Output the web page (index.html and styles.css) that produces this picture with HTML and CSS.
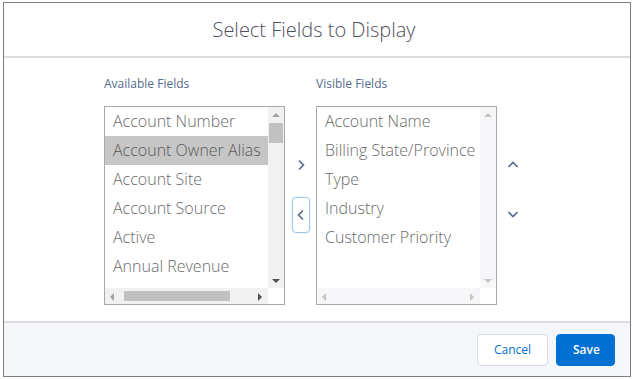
FILE: index.html
```html
<!DOCTYPE html>
<html lang="en">
<head>
    <meta charset="UTF-8">
    <title>Select Fields to Display</title>
    <link rel="stylesheet" href="styles.css">
</head>
<body>

    <div id="modal">
        <div class="modal-header">
            <h2>Select Fields to Display</h2>
        </div>

        <div class="modal-body">
            <div class="dueling">
                <div class="column">
                    <div class="col-label">Available Fields</div>
                    <div class="listbox">
                        <ul class="options">
                            <li>Account Number</li>
                            <li class="selected">Account Owner Alias</li>
                            <li>Account Site</li>
                            <li>Account Source</li>
                            <li>Active</li>
                            <li>Annual Revenue</li>
                        </ul>
                        <div class="vscroll">
                            <span class="arrow up"></span>
                            <div class="vtrack"><div class="vthumb"></div></div>
                            <span class="arrow down"></span>
                        </div>
                        <div class="hscroll">
                            <span class="arrow left"></span>
                            <div class="htrack"><div class="hthumb"></div></div>
                            <span class="arrow right"></span>
                        </div>
                        <div class="corner"></div>
                    </div>
                </div>

                <div class="move-buttons">
                    <button class="icon-btn" type="button">
                        <svg width="10" height="12" viewBox="0 0 10 12"><path d="M3 1.5 L7.5 6 L3 10.5" fill="none" stroke="#54698d" stroke-width="1.6"/></svg>
                    </button>
                    <button class="icon-btn focused" type="button">
                        <svg width="10" height="12" viewBox="0 0 10 12"><path d="M7 1.5 L2.5 6 L7 10.5" fill="none" stroke="#54698d" stroke-width="1.6"/></svg>
                    </button>
                </div>

                <div class="column">
                    <div class="col-label">Visible Fields</div>
                    <div class="listbox light">
                        <ul class="options">
                            <li>Account Name</li>
                            <li>Billing State/Province</li>
                            <li>Type</li>
                            <li>Industry</li>
                            <li>Customer Priority</li>
                        </ul>
                        <div class="vscroll">
                            <span class="arrow up"></span>
                            <div class="vtrack"></div>
                            <span class="arrow down"></span>
                        </div>
                        <div class="hscroll">
                            <span class="arrow left"></span>
                            <div class="htrack"></div>
                            <span class="arrow right"></span>
                        </div>
                        <div class="corner"></div>
                    </div>
                </div>

                <div class="order-buttons">
                    <button class="icon-btn" type="button">
                        <svg width="12" height="10" viewBox="0 0 12 10"><path d="M1.5 7 L6 2.5 L10.5 7" fill="none" stroke="#54698d" stroke-width="1.6"/></svg>
                    </button>
                    <button class="icon-btn" type="button">
                        <svg width="12" height="10" viewBox="0 0 12 10"><path d="M1.5 3 L6 7.5 L10.5 3" fill="none" stroke="#54698d" stroke-width="1.6"/></svg>
                    </button>
                </div>
            </div>
        </div>

        <div class="modal-footer">
            <button class="btn neutral" type="button">Cancel</button>
            <button class="btn brand" type="button">Save</button>
        </div>
    </div>

</body>
</html>
```

FILE: styles.css
```css
body {
    font-family: 'Open Sans', 'Liberation Sans', sans-serif;
    background-color: #fff;
    margin: 0;
    padding: 0;
}

#modal {
    margin: 2px 2px 0 3px;
    height: 373px;
    border: 1px solid #7d7d7d;
    display: flex;
    flex-direction: column;
    background-color: #fff;
}

.modal-header {
    height: 53px;
    border-bottom: 2px solid #dddddd;
    display: flex;
    align-items: center;
    justify-content: center;
}

.modal-header h2 {
    margin: 0 0 0 -6px;
    font-size: 20px;
    font-weight: 300;
    color: #50505e;
}

.modal-body {
    flex: 1;
    padding: 18px 0 0 100px;
}

.dueling {
    display: flex;
    align-items: flex-start;
}

.col-label {
    font-size: 12px;
    color: #54698d;
    height: 16px;
    line-height: 16px;
    margin-bottom: 14px;
}

.listbox {
    width: 179px;
    height: 197px;
    border: 1px solid #a8a8a8;
    display: grid;
    grid-template-columns: 1fr 16px;
    grid-template-rows: 1fr 16px;
    overflow: hidden;
}

.options {
    list-style: none;
    margin: 0;
    padding: 0;
    overflow: hidden;
}

.options li {
    height: 29px;
    line-height: 28px;
    padding-left: 8px;
    font-size: 16px;
    font-weight: 300;
    color: #6a6a6a;
    white-space: nowrap;
}

.options li.selected {
    background-color: #c6c6c6;
    color: #5a5a5a;
}

.vscroll {
    background-color: #f1f1f1;
    display: flex;
    flex-direction: column;
}

.vtrack {
    flex: 1;
    padding: 0 1px;
}

.vthumb {
    margin-top: 1px;
    height: 20px;
    background-color: #c1c1c1;
}

.hscroll {
    background-color: #f1f1f1;
    display: flex;
    align-items: center;
}

.htrack {
    flex: 1;
    height: 10px;
}

.hthumb {
    margin-left: 3px;
    width: 106px;
    height: 10px;
    background-color: #c1c1c1;
}

.corner {
    background-color: #fff;
}

.light .vscroll,
.light .hscroll {
    background-color: #f6f6f8;
}

.arrow {
    display: block;
    width: 16px;
    height: 15px;
    flex: none;
    position: relative;
}

.arrow::after {
    content: "";
    position: absolute;
    left: 4px;
    top: 5px;
    border: 4px solid transparent;
}

.arrow.up::after {
    border-bottom: 4px solid #a3a3a3;
    border-top-width: 0;
    top: 6px;
}

.arrow.down::after {
    border-top: 4px solid #505050;
    border-bottom-width: 0;
    top: 6px;
}

.arrow.left::after {
    border-right: 4px solid #a3a3a3;
    border-left-width: 0;
    left: 5px;
    top: 4px;
}

.arrow.right::after {
    border-left: 4px solid #505050;
    border-right-width: 0;
    left: 6px;
    top: 4px;
}

.light .arrow.up::after {
    border-bottom-color: #c4c4c4;
}

.light .arrow.down::after {
    border-top-color: #c4c4c4;
}

.light .arrow.left::after {
    border-right-color: #c4c4c4;
}

.light .arrow.right::after {
    border-left-color: #c4c4c4;
}

.move-buttons {
    width: 31px;
    margin-top: 71px;
    display: flex;
    flex-direction: column;
    align-items: center;
    gap: 14px;
}

.order-buttons {
    width: 32px;
    margin-top: 71px;
    display: flex;
    flex-direction: column;
    align-items: center;
    gap: 13px;
}

.icon-btn {
    width: 18px;
    height: 36px;
    padding: 0;
    border: 1px solid transparent;
    border-radius: 4px;
    background-color: transparent;
    display: flex;
    align-items: center;
    justify-content: center;
}

.icon-btn.focused {
    border-color: #9fc7ea;
    box-shadow: 0 0 2px #cfe3f5;
}

.modal-footer {
    height: 53px;
    border-top: 2px solid #dddddd;
    background-color: #f4f6f9;
    display: flex;
    align-items: center;
    justify-content: flex-end;
    gap: 8px;
    padding-right: 15px;
}

.btn {
    height: 32px;
    padding: 0 16px;
    border-radius: 4px;
    font-family: 'Open Sans', 'Liberation Sans', sans-serif;
    font-size: 12px;
    cursor: pointer;
}

.neutral {
    width: 71px;
    background-color: #fff;
    border: 1px solid #d8dde6;
    color: #0070d2;
}

.brand {
    width: 59px;
    background-color: #0070d2;
    border: 1px solid #0070d2;
    color: #fff;
    font-weight: 600;
}
```
